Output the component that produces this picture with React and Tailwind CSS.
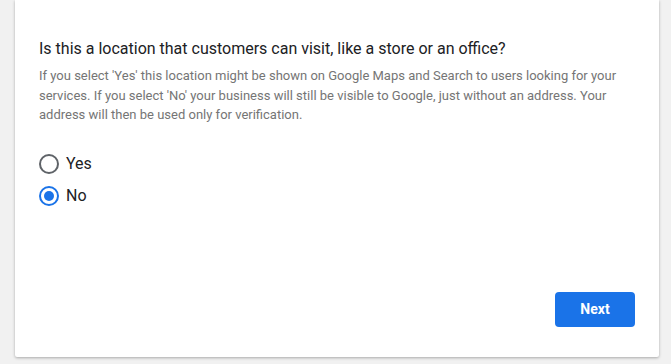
import React, { useState } from "react";

function Radio({ label, checked, onClick }) {
    return (
        <label className="flex items-center h-[32px] cursor-pointer" onClick={onClick}>
            <span
                className={
                    checked
                        ? "w-[20px] h-[20px] rounded-full border-2 border-[#1a73e8] flex items-center justify-center"
                        : "w-[20px] h-[20px] rounded-full border-2 border-[#5f6368] flex items-center justify-center"
                }
            >
                {checked && <span className="w-[10px] h-[10px] rounded-full bg-[#1a73e8]" />}
            </span>
            <span className="ml-[7px] text-[16px] text-[#202124]">{label}</span>
        </label>
    );
}

export default function App() {
    const [answer, setAnswer] = useState("no");

    return (
        <div className="h-[364px] bg-[#f1f1f1] overflow-hidden" style={{ fontFamily: "Roboto, 'Liberation Sans', sans-serif" }}>
            <div className="ml-[15px] w-[644px] h-[357px] bg-white rounded-b-[2px] shadow-[0_1px_3px_rgba(0,0,0,0.3)] px-[24px] pt-[37px] flex flex-col">
                <h2 className="text-[16px] leading-[24px] text-[#202124]">
                    Is this a location that customers can visit, like a store or an office?
                </h2>
                <p className="mt-[5px] text-[13px] leading-[19.5px] text-[#757575]">
                    If you select 'Yes' this location might be shown on Google Maps and Search to users looking for your
                    services. If you select 'No' your business will still be visible to Google, just without an address. Your
                    address will then be used only for verification.
                </p>

                <div className="mt-[23px] flex flex-col">
                    <Radio label="Yes" checked={answer === "yes"} onClick={() => setAnswer("yes")} />
                    <Radio label="No" checked={answer === "no"} onClick={() => setAnswer("no")} />
                </div>

                <div className="mt-auto mb-[30px] flex justify-end">
                    <button className="w-[80px] h-[35px] rounded-[4px] bg-[#1a73e8] text-white text-[14px] font-bold">
                        Next
                    </button>
                </div>
            </div>
        </div>
    );
}
